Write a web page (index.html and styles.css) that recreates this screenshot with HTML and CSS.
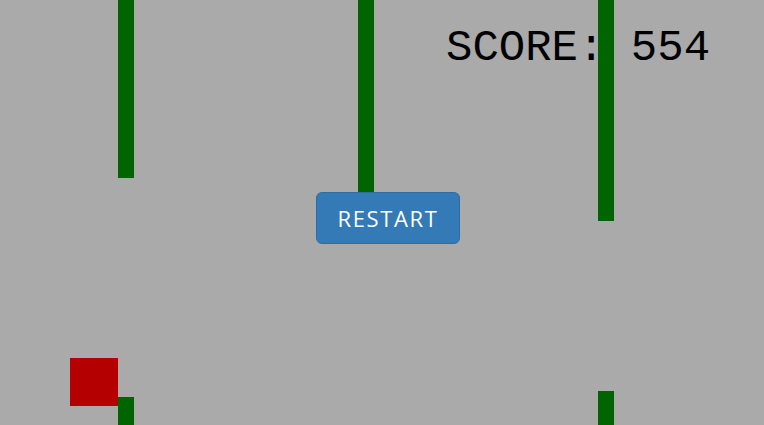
FILE: index.html
```html
<!DOCTYPE html>
<html>
<head>
<meta charset="utf-8">
<link rel="stylesheet" href="styles.css">
</head>
<body>
<div class="stage">
  <div class="pipe pipe-1-top"></div>
  <div class="pipe pipe-1-bottom"></div>
  <div class="pipe pipe-2-top"></div>
  <div class="pipe pipe-3-top"></div>
  <div class="pipe pipe-3-bottom"></div>
  <div class="player"></div>
  <div class="score">SCORE: 554</div>
  <button class="restart">RESTART</button>
</div>
</body>
</html>
```
FILE: styles.css
```css
html, body {
  margin: 0;
  padding: 0;
  background: #aaaaaa;
}
.stage {
  position: relative;
  width: 764px;
  height: 425px;
  overflow: hidden;
  background: #aaaaaa;
}
.pipe {
  position: absolute;
  width: 16px;
  background: #006400;
}
.pipe-1-top { left: 118px; top: 0; height: 178px; }
.pipe-1-bottom { left: 118px; top: 397px; height: 40px; }
.pipe-2-top { left: 358px; top: 0; height: 205px; }
.pipe-3-top { left: 598px; top: 0; height: 221px; }
.pipe-3-bottom { left: 598px; top: 391px; height: 40px; }
.player {
  position: absolute;
  left: 70px;
  top: 358px;
  width: 48px;
  height: 48px;
  background: #b40000;
}
.score {
  position: absolute;
  left: 446px;
  top: 26px;
  font-family: "Liberation Mono", monospace;
  font-size: 44px;
  line-height: 44px;
  color: #000;
  white-space: pre;
}
.restart {
  position: absolute;
  left: 316px;
  top: 192px;
  width: 144px;
  height: 52px;
  padding: 0;
  border: 1px solid #2e6da4;
  border-radius: 6px;
  background: #337ab7;
  color: #fff;
  font-family: "Open Sans", sans-serif;
  font-size: 22px;
  letter-spacing: 1.6px;
  line-height: 50px;
  text-align: center;
}
```
